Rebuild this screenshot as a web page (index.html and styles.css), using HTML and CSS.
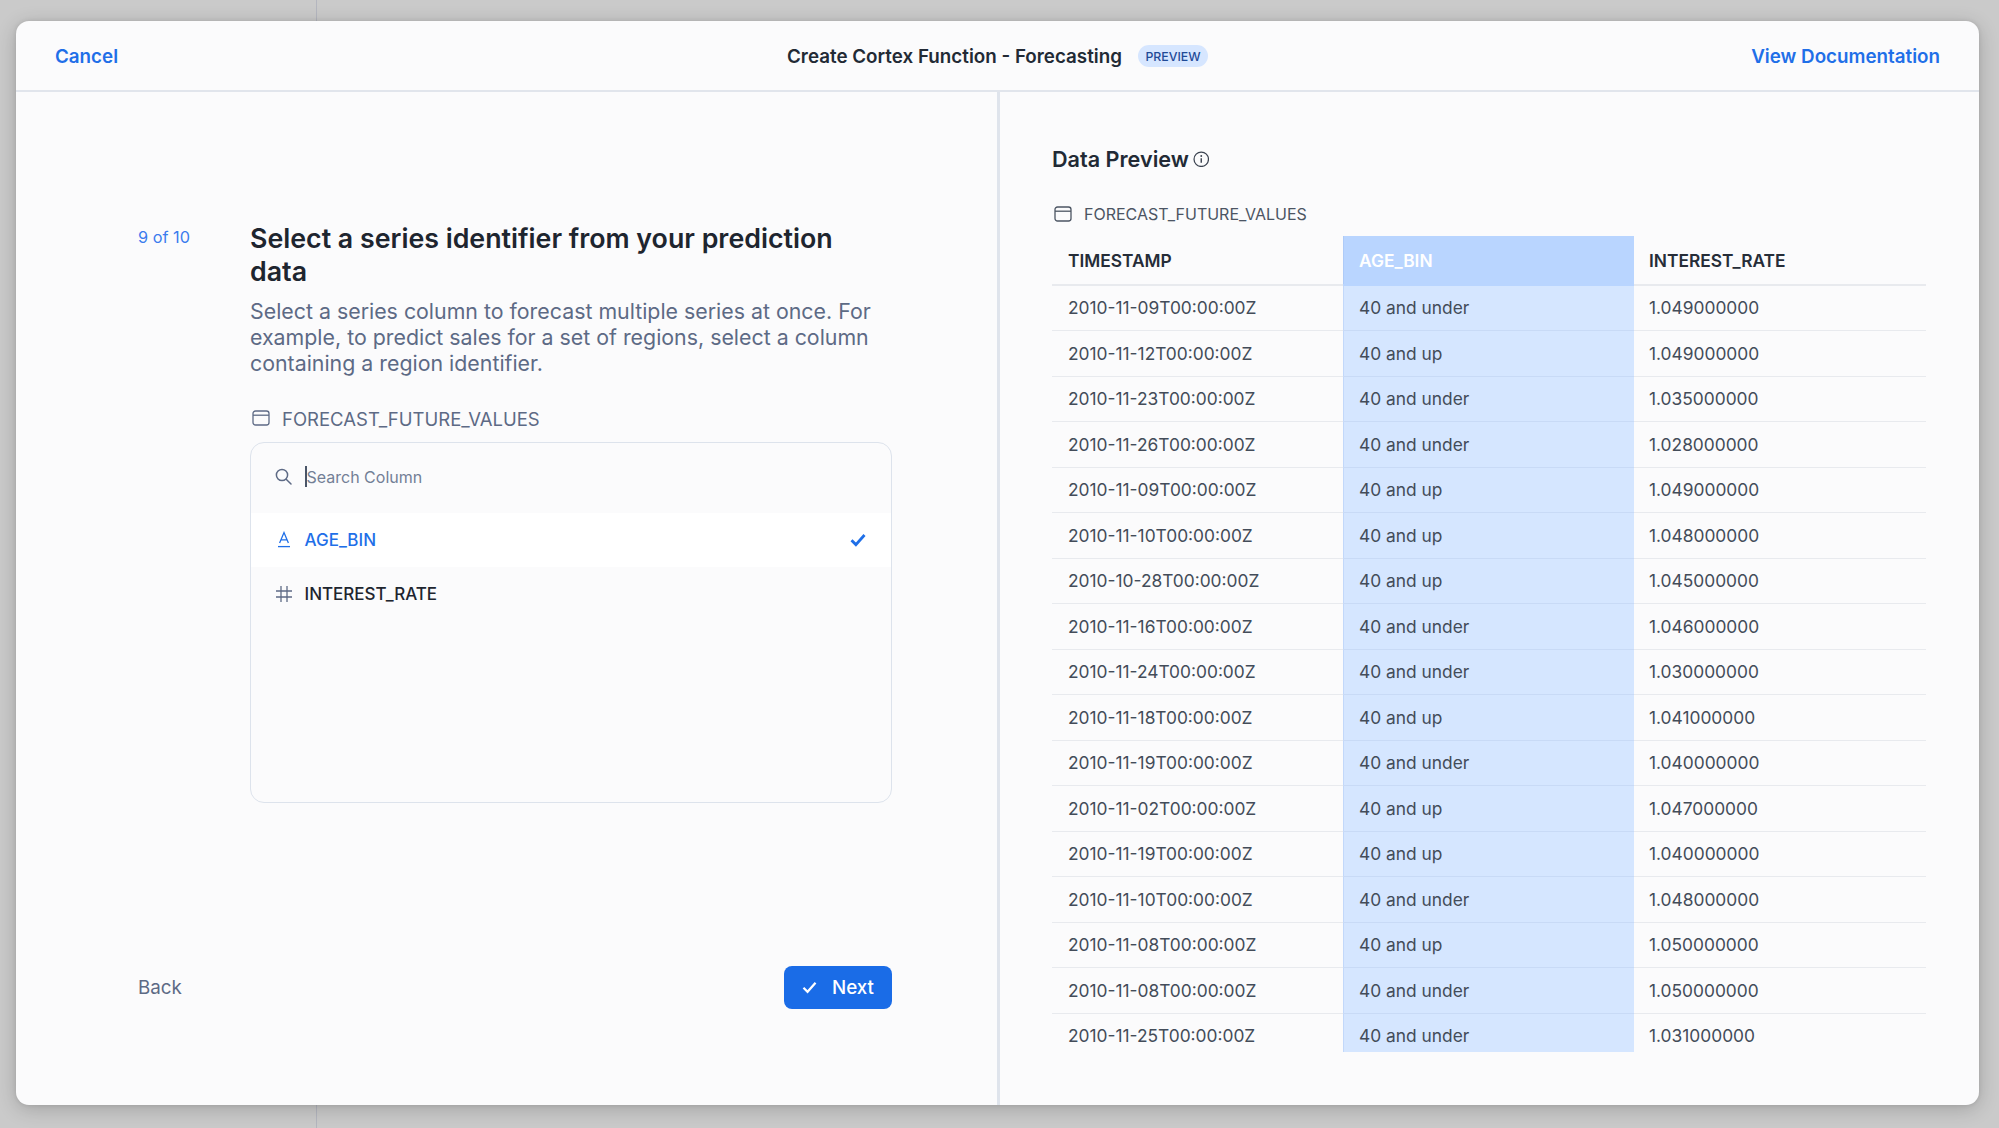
FILE: index.html
```html
<!DOCTYPE html>
<html lang="en">
<head>
<meta charset="utf-8">
<title>Create Cortex Function - Forecasting</title>
<link rel="stylesheet" href="styles.css">
</head>
<body>
<div class="modal">
  <header class="top">
    <a class="link cancel">Cancel</a>
    <div class="top-title">
      <span class="title-text">Create Cortex Function - Forecasting</span>
      <span class="badge">PREVIEW</span>
    </div>
    <a class="link doc">View Documentation</a>
  </header>
  <div class="panes">
    <section class="left">
      <div class="step">
        <div class="step-num">9 of 10</div>
        <div class="step-body">
          <h1>Select a series identifier from your prediction data</h1>
          <p class="sub">Select a series column to forecast multiple series at once. For example, to predict sales for a set of regions, select a column containing a region identifier.</p>
          <div class="tbl-label">
            <svg class="tbl-icon" viewBox="0 0 18 16" fill="none" stroke="currentColor" stroke-width="1.3"><rect x="1" y="1" width="16" height="14" rx="2.5"/><path d="M1 5.2h16"/></svg>
            <span>FORECAST_FUTURE_VALUES</span>
          </div>
          <div class="picker">
            <div class="search">
              <svg class="search-icon" viewBox="0 0 17 17" fill="none" stroke="currentColor" stroke-width="1.5" stroke-linecap="round"><circle cx="7" cy="7" r="5.6"/><path d="M11.2 11.2l4.8 4.8"/></svg>
              <span class="caret"></span>
              <span class="placeholder">Search Column</span>
            </div>
            <div class="opt selected">
              <svg class="opt-icon" viewBox="0 0 18 18" fill="none" stroke="currentColor" stroke-width="1.3"><path d="M4.6 12L9 1.6 13.4 12M6 8.8h6"/><path d="M3 15.6h12"/></svg>
              <span class="opt-name">AGE_BIN</span>
              <svg class="opt-check" viewBox="0 0 16 14" fill="none" stroke="currentColor" stroke-width="2.8"><path d="M1.5 7.2l4.4 4.4L14.5 2"/></svg>
            </div>
            <div class="opt">
              <svg class="opt-icon hash" viewBox="0 0 18 18" fill="none" stroke="currentColor" stroke-width="1.3"><path d="M6 1v16M12 1v16M1 6h16M1 12h16"/></svg>
              <span class="opt-name">INTEREST_RATE</span>
            </div>
          </div>
        </div>
      </div>
      <footer class="actions">
        <a class="back">Back</a>
        <button class="next" type="button">
          <svg class="next-icon" viewBox="0 0 16 14" fill="none" stroke="currentColor" stroke-width="2.4"><path d="M1.5 7.2l4.4 4.4L14.5 2"/></svg>
          <span>Next</span>
        </button>
      </footer>
    </section>
    <section class="right">
      <div class="dp-head">
        <h2>Data Preview</h2>
        <svg class="info" viewBox="0 0 16 16" fill="none" stroke="currentColor" stroke-width="1.2"><circle cx="8" cy="8" r="7"/><path d="M8 7v4.5" stroke-width="1.4"/><circle cx="8" cy="4.8" r=".9" fill="currentColor" stroke="none"/></svg>
      </div>
      <div class="dp-label">
        <svg class="dp-icon" viewBox="0 0 18 16" fill="none" stroke="currentColor" stroke-width="1.3"><rect x="1" y="1" width="16" height="14" rx="2.5"/><path d="M1 5.2h16"/></svg>
        <span>FORECAST_FUTURE_VALUES</span>
      </div>
      <div class="table-wrap">
        <table class="data">
          <thead><tr><th>TIMESTAMP</th><th class="hl">AGE_BIN</th><th>INTEREST_RATE</th></tr></thead>
          <tbody>
            <tr><td>2010-11-09T00:00:00Z</td><td class="hl">40 and under</td><td>1.049000000</td></tr>
            <tr><td>2010-11-12T00:00:00Z</td><td class="hl">40 and up</td><td>1.049000000</td></tr>
            <tr><td>2010-11-23T00:00:00Z</td><td class="hl">40 and under</td><td>1.035000000</td></tr>
            <tr><td>2010-11-26T00:00:00Z</td><td class="hl">40 and under</td><td>1.028000000</td></tr>
            <tr><td>2010-11-09T00:00:00Z</td><td class="hl">40 and up</td><td>1.049000000</td></tr>
            <tr><td>2010-11-10T00:00:00Z</td><td class="hl">40 and up</td><td>1.048000000</td></tr>
            <tr><td>2010-10-28T00:00:00Z</td><td class="hl">40 and up</td><td>1.045000000</td></tr>
            <tr><td>2010-11-16T00:00:00Z</td><td class="hl">40 and under</td><td>1.046000000</td></tr>
            <tr><td>2010-11-24T00:00:00Z</td><td class="hl">40 and under</td><td>1.030000000</td></tr>
            <tr><td>2010-11-18T00:00:00Z</td><td class="hl">40 and up</td><td>1.041000000</td></tr>
            <tr><td>2010-11-19T00:00:00Z</td><td class="hl">40 and under</td><td>1.040000000</td></tr>
            <tr><td>2010-11-02T00:00:00Z</td><td class="hl">40 and up</td><td>1.047000000</td></tr>
            <tr><td>2010-11-19T00:00:00Z</td><td class="hl">40 and up</td><td>1.040000000</td></tr>
            <tr><td>2010-11-10T00:00:00Z</td><td class="hl">40 and under</td><td>1.048000000</td></tr>
            <tr><td>2010-11-08T00:00:00Z</td><td class="hl">40 and up</td><td>1.050000000</td></tr>
            <tr><td>2010-11-08T00:00:00Z</td><td class="hl">40 and under</td><td>1.050000000</td></tr>
            <tr><td>2010-11-25T00:00:00Z</td><td class="hl">40 and under</td><td>1.031000000</td></tr>
          </tbody>
        </table>
      </div>
    </section>
  </div>
</div>
</body>
</html>
```
FILE: styles.css
```css
* { box-sizing: border-box; }
html, body { margin: 0; height: 100%; }
body {
  position: relative;
  height: 1128px;
  overflow: hidden;
  padding: 21px 20px 23px 16px;
  background: #cacaca;
  font-family: Inter, "Liberation Sans", sans-serif;
  color: #1e252f;
}
body::before {
  content: "";
  position: absolute;
  left: 316px;
  top: 0;
  bottom: 0;
  width: 1px;
  background: #b4b6bf;
}
.modal {
  position: relative;
  height: 1084px;
  display: flex;
  flex-direction: column;
  background: #fbfbfc;
  border-radius: 13px;
  box-shadow: 0 4px 20px rgba(0, 0, 0, 0.2), 0 0 4px rgba(0, 0, 0, 0.1);
}
.top {
  flex: none;
  height: 71px;
  display: grid;
  grid-template-columns: 1fr auto 1fr;
  align-items: center;
  padding: 1px 39px 0;
  border-bottom: 2px solid #e1e5ec;
}
.link {
  color: #1f6fe8;
  font-size: 18.8px;
  font-weight: 600;
}
.doc { justify-self: end; }
.top-title {
  display: flex;
  align-items: center;
  gap: 16px;
}
.title-text {
  font-size: 18.8px;
  font-weight: 600;
  color: #222a35;
}
.badge {
  width: 70px;
  height: 22px;
  display: flex;
  align-items: center;
  justify-content: center;
  border-radius: 11px;
  background: #d6e6ff;
  color: #1f4a97;
  font-size: 12.3px;
  font-weight: 500;
}
.panes {
  flex: 1;
  min-height: 0;
  display: grid;
  grid-template-columns: 984px 1fr;
}
.left {
  display: flex;
  flex-direction: column;
  padding: 130px 105px 96px 122px;
  border-right: 3px solid #dfe4ec;
}
.step {
  display: grid;
  grid-template-columns: 112px 1fr;
}
.step-num {
  padding-top: 5px;
  color: #3b7cee;
  font-size: 16.3px;
  line-height: 20px;
}
h1 {
  margin: 0;
  font-size: 26.77px;
  line-height: 33px;
  font-weight: 600;
  color: #1e252f;
}
.sub {
  margin: 10px 0 0;
  font-size: 21.35px;
  line-height: 26px;
  color: #5d6a85;
}
.tbl-label {
  margin-top: 31px;
  height: 24px;
  display: flex;
  align-items: center;
  gap: 12px;
  padding-left: 2px;
  color: #5d6a85;
  font-size: 18.5px;
}
.tbl-icon { width: 18px; height: 16px; margin-top: -3px; }
.picker {
  margin-top: 11px;
  height: 361px;
  border: 1.5px solid #dde3ec;
  border-radius: 14px;
}
.search {
  height: 69.5px;
  display: flex;
  align-items: center;
  padding: 0 0 2px 24px;
  color: #5d6a85;
}
.search-icon { width: 17px; height: 17px; margin-right: 13px; }
.caret { width: 1.5px; height: 21px; background: #4a5568; }
.placeholder { font-size: 16px; color: #737f96; }
.opt {
  height: 54px;
  display: flex;
  align-items: center;
  padding: 0 25px 0 24px;
  color: #1e252f;
  font-size: 17px;
  font-weight: 500;
}
.opt.selected { background: #fff; color: #1f6fe8; }
.opt-icon { width: 18px; height: 18px; margin-right: 11.5px; }
.hash { color: #5d6a85; }
.opt-name { flex: 1; }
.opt-check { width: 16px; height: 14px; }
.actions {
  margin-top: auto;
  display: flex;
  align-items: center;
  justify-content: space-between;
}
.back { color: #5d6a85; font-size: 18.8px; }
.next {
  width: 108px;
  height: 43px;
  display: flex;
  align-items: center;
  justify-content: center;
  gap: 15px;
  border: 0;
  border-radius: 8px;
  background: #1a6ce7;
  color: #fff;
  font-family: inherit;
  font-size: 18.8px;
  font-weight: 500;
}
.next-icon { width: 15px; height: 13px; }
.right {
  min-width: 0;
  display: flex;
  flex-direction: column;
  padding: 52px 0 0 52px;
}
.dp-head {
  height: 30px;
  display: flex;
  align-items: center;
  gap: 4px;
}
h2 {
  margin: 0;
  font-size: 21.6px;
  font-weight: 600;
  color: #222a35;
}
.info { width: 16.5px; height: 16.5px; color: #3b4350; }
.dp-label {
  margin-top: 28px;
  height: 24px;
  display: flex;
  align-items: center;
  gap: 12px;
  padding-left: 2px;
  color: #4c5563;
  font-size: 16px;
}
.dp-icon { width: 18px; height: 16px; }
.table-wrap {
  margin-top: 10px;
  width: 874px;
  height: 816px;
  overflow: hidden;
}
.data {
  display: block;
  border-collapse: collapse;
}
.data thead, .data tbody { display: block; }
.data tr {
  display: grid;
  grid-template-columns: 290.5px 291.5px 292px;
}
.data th, .data td {
  display: flex;
  align-items: center;
  padding: 0 16px;
  border-bottom: 1.5px solid #e8eaee;
  text-align: left;
}
.data th {
  height: 49.5px;
  padding-top: 1px;
  font-size: 17.35px;
  font-weight: 600;
  color: #262d38;
  border-bottom-width: 2px;
}
.data td {
  height: 45.5px;
  font-size: 17.35px;
  color: #434c59;
}
.data th:last-child, .data td:last-child { padding-left: 15px; }
.data th.hl {
  background: #b9d5ff;
  color: #fff;
  border-bottom-color: #b9d5ff;
  padding-left: 16.5px;
  box-shadow: inset 1px 0 #aecbf8;
}
.data td.hl {
  background: #d5e6ff;
  border-bottom-color: #c8daf6;
  padding-left: 16.5px;
  box-shadow: inset 1px 0 #c2d8fa;
}
```
